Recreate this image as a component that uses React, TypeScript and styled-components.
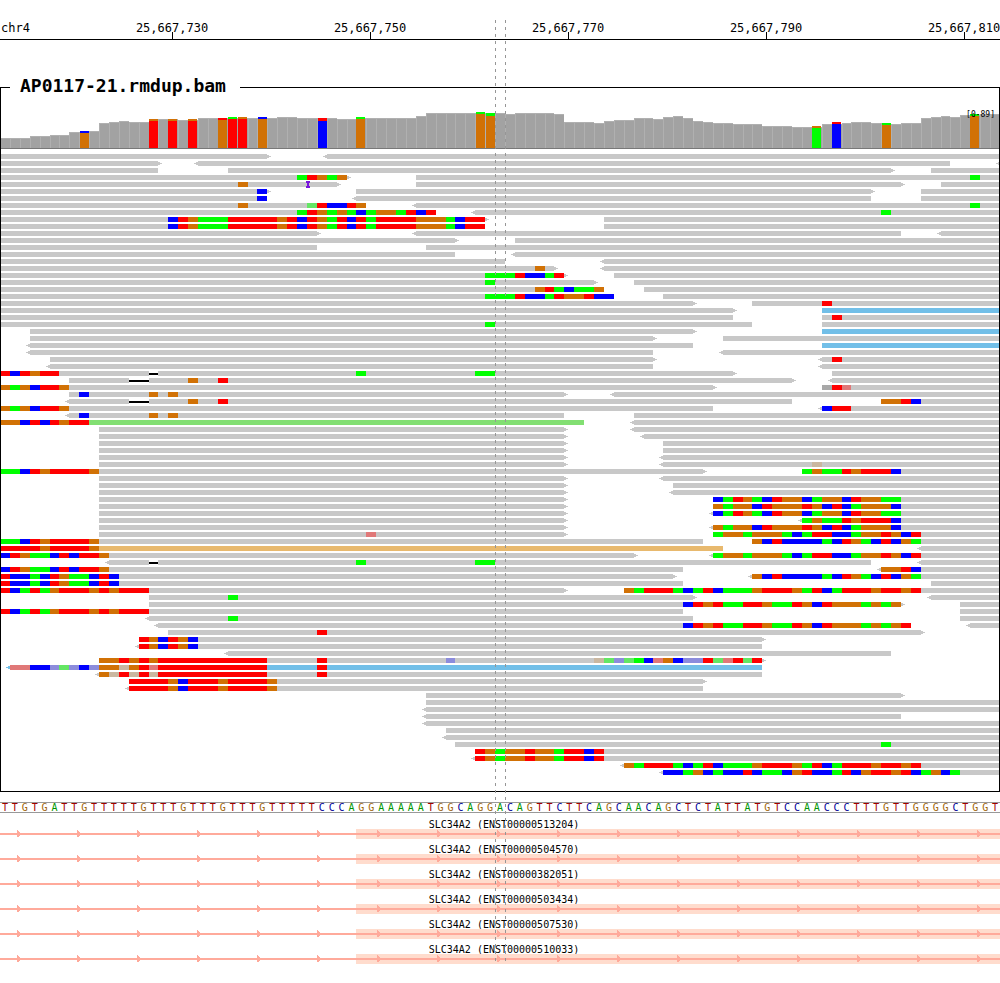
import React from "react";
import styled, { createGlobalStyle } from "styled-components";

const MONO = '"DejaVu Sans Mono", "Liberation Mono", monospace';

/* ---------- data ---------- */

const BASE = 9.9;
const px = (base: number) => Math.round(base * BASE);

const POSITIONS = ["25,667,730", "25,667,750", "25,667,770", "25,667,790", "25,667,810"];

const BASE_COLORS: Record<string, string> = {
  A: "#00ff00",
  C: "#0000ff",
  G: "#d17105",
  T: "#ff0000",
  a: "#64e664",
  c: "#8c8cdc",
  g: "#cab7a0",
  t: "#e07878",
  n: "#a8a8a8",
};

const READ_COLORS: Record<string, string> = {
  "": "#c8c8c8",
  b: "#72bfe8",
  g: "#82df72",
  o: "#e8b96e",
};

const LETTER_COLORS: Record<string, string> = {
  A: "#009600",
  C: "#000096",
  G: "#a0640a",
  T: "#a00000",
};

const SEQUENCE =
  "TTGTGATTGTTTTTGTTTGTTTGTTTGTTTTTCCCAGGAAAAATGGCAGGA" +
  "CAGTTCTTCAGCAACAGCTCTATTATGTCCAACCCTTTGTTGGGGCTGGT";

const TRANSCRIPTS = [
  "ENST00000513204",
  "ENST00000504570",
  "ENST00000382051",
  "ENST00000503434",
  "ENST00000507530",
  "ENST00000510033",
];

/* Depth per base. */
const DEPTH = [
  10, 10, 10, 12, 12, 13, 13, 16, 16, 17, 25, 26, 27, 26, 26, 29, 29, 29, 28, 28,
  30, 30, 30, 30, 30, 30, 30, 30, 31, 31, 30, 30, 30, 30, 29, 29, 30, 30, 30, 30,
  30, 30, 32, 35, 35, 35, 35, 35, 35, 35, 35, 34, 35, 35, 35, 35, 34, 26, 26, 26,
  25, 27, 28, 28, 30, 30, 29, 31, 32, 30, 27, 26, 25, 25, 24, 24, 24, 22, 22, 22,
  21, 21, 21, 24, 24, 25, 26, 26, 25, 25, 24, 25, 25, 30, 31, 32, 31, 33, 33, 34, 34,
];

/* Variant columns: left edge, total height, height of the main allele, minor + main allele. */
const VARIANTS: [number, number, number, string][] = [
  [80, 17, 15, "CG"],
  [149, 29, 27, "GT"],
  [168, 29, 27, "GT"],
  [188, 29, 27, "GT"],
  [218, 30, 28, "TG"],
  [228, 31, 29, "AT"],
  [238, 31, 29, "GT"],
  [258, 31, 29, "CG"],
  [318, 30, 27, "TC"],
  [356, 31, 29, "AG"],
  [476, 36, 34, "AG"],
  [486, 35, 32, "AG"],
  [812, 22, 20, "GA"],
  [832, 26, 24, "TC"],
  [882, 25, 23, "AG"],
  [970, 34, 32, "AG"],
];

const CLIP_A = "CTGAAATTTTTGTCTGATCTATTTTGGGACTT";
const CLIP_B = "AACTGTTTTG";
const CLIP_C = "AGAATGTTTC";
const CLIP_D = "CATGACTGGCAGGCTGGAA";
const CLIP_E = "GAGGCTGGGTGCTCAGGGC";
const CLIP_F = "AGGAGGGACATTCCAGGTGCT";
const CLIP_G = "GCTCCCCACTGACTCGA";
const CLIP_H = "CTGAACTCTTG";
const CLIP_I = "TCCACTGAACTC";
const CLIP_J = "TCATAGTTTGTGTTT";
const CLIP_K = "GATTTACATCAAAGTTTGATCATTTGTTGT";
const CLIP_L = "CTGTAATTGAATGCTGGGAGAG";
const CLIP_M = "TTTTGCTTTGTTTTG";
const CLIP_N = "TGAGGTGGATTCT";
const T11 = "TTTTTTTTTTT";

/*
 * One string per lane, coordinates in bases from the left edge:
 *   <a-b>   read, with an optional arrow at either end and a colour suffix
 *   n:SEQ   mismatching bases
 *   a~b     deletion
 *   n^      insertion
 */
const LANES = [
  "0-27> <33-101",
  "0-16> <20-96 <101-102",
  "0-16 23-90> 94-101",
  "0-35> 42-101 30:ATGAG 98:A",
  "0-34> 42-91> 95-101 24:G 31^",
  "0-27> 36-88> 93-101 26:C",
  "0-27 <36-88 93-101 26:C",
  "0-37 <42-101 24:G 31:aTCCTG 98:A",
  "0-44 <48-101 30:ATGAGACAGGATCT 89:A",
  `0-49> 61-101 17:${CLIP_A}`,
  `0-49 61-101 17:${CLIP_A}`,
  "0-32> <42-91 <95-101",
  "0-46> 52-101",
  "0-32 43-101",
  "0-46 <52-101",
  "0-51 <61-101",
  "0-56> <61-101 54:G",
  "0-57> 62-101 49:AAATCCAT",
  "0-60> 64-101 49:A",
  "0-61 65-101 54:GTACAAG",
  "0-62 67-101 49:AAATCCATGGTCC",
  "0-70> 76-101 83:T",
  "0-74> 83-101b",
  "0-74 83-101 84:T",
  "0-76 83-101 49:A",
  "3-70> 83-101b",
  "3-66> 73-101",
  "<3-70 83-101b",
  "<3-66 <73-101",
  "5-66> <83-101 84:T",
  "<5-66 <83-101",
  "0-74> 84-101 0:TCTGTT 15~16 36:A 48:AA",
  "7-80> <84-101 13~15 19:G 22:T",
  "0-72> 83-101 0:GAGCTTG 83:nTt",
  "7-57> <62-101 8:C 15:G 17:G",
  "<7-80 89-101 13~15 19:G 22:T 89:GGTC",
  "0-72 <83-101 0:GAGCTTG 83:CTT",
  "<7-57 64-101 8:C 15:G 17:G",
  "0-59g <64-101 0:GGCTCTGTT",
  "10-57> <64-101",
  "10-57> <65-101",
  "10-57> 67-101",
  "10-57> 67-101",
  "10-57> <67-101",
  "10-57> <67-101 82:g",
  `0-71> 81-101 0:${CLIP_B} 81:${CLIP_C}`,
  "10-57> <67-101",
  "10-57> 68-101",
  "10-57> <68-101",
  `10-57> 72-101 72:${CLIP_D}`,
  `10-57> 72-101 72:${CLIP_E}`,
  `10-57> <72-101 72:${CLIP_D}`,
  `10-57> <81-101 81:${CLIP_C}`,
  `10-57> <72-101 72:${CLIP_E}`,
  `10-57> 72-101 37:t 72:${CLIP_F}`,
  `0-71 76-101 0:${CLIP_B} 76:${CLIP_G}`,
  "0-73o <93-101 0:TTTTGTTTTG",
  `0-64> <72-101 0:${CLIP_H} 72:${CLIP_F}`,
  "<11-88 <93-101 15~16 36:A 48:AA",
  `0-69 <89-101 0:${CLIP_H} 89:GGTC`,
  `0-68> <76-101 0:${CLIP_I} 76:${CLIP_G}`,
  `0-69 94-101 0:${CLIP_I}`,
  `0-57> 63-101 0:${CLIP_J} 63:${CLIP_K}`,
  "15-70> <94-101 23:A",
  `15-91> 97-101 69:${CLIP_L}`,
  `0-69 97-101 0:${CLIP_J}`,
  "<15-70 97-101 23:A",
  `<16-92 <98-101 69:${CLIP_L}T`,
  "17-93> 32:T",
  "14-77> 14:TGCTGC",
  "<14-77 14:TGCTGC",
  "<23-90",
  `10-77> 10:GGTGTG${T11} 32:T 45:c 60:gacaACtGCccTatTaT`,
  `<1-77b 1:ttCCcacCcGGgGTt${T11} 32:T`,
  `<10-77 10:GgTgTg${T11} 32:T`,
  `13-71> 13:${CLIP_M}`,
  `<13-71 13:${CLIP_M}`,
  "43-91>",
  "43-101",
  "<43-101",
  "<43-91",
  "<43-101",
  "45-101",
  "<45-101",
  "46-101 89:A",
  `48-101 48:${CLIP_N}`,
  `<48-101 48:${CLIP_N}`,
  `<63-101 63:${CLIP_K}`,
  "<67-101 67:CCAGCACCTCAACGTCCATCGTTGTCAGCA",
];

/* ---------- styles ---------- */

const GlobalStyle = createGlobalStyle`
  body {
    margin: 0;
    background: #ffffff;
    color: #000000;
    font-family: ${MONO};
  }
`;

const Page = styled.main`
  position: relative;
  padding-bottom: 19px;
  overflow: hidden;
`;

const Ruler = styled.header`
  display: flex;
  overflow: hidden;
  padding-top: 23px;
  border-bottom: 1px solid #000000;
  font-size: 12px;
  line-height: 10px;
`;

const Chromosome = styled.div`
  flex: 0 0 7.3%;
  box-sizing: border-box;
  padding-left: 1px;
`;

const Mark = styled.div`
  flex: 0 0 19.8%;
  display: flex;
  flex-direction: column;
  align-items: center;

  &::after {
    content: "";
    width: 1px;
    height: 7px;
    margin-top: -1px;
    background: #000000;
  }
`;

const Track = styled.fieldset`
  position: relative;
  min-width: 0;
  margin: 37px 0 0;
  padding: 0;
  border: 1px solid #000000;
`;

const TrackName = styled.legend`
  box-sizing: border-box;
  min-width: 230px;
  margin-left: 9px;
  padding: 0 10px 2px;
  font-size: 18px;
  font-weight: bold;
  line-height: 18px;
`;

const DepthRange = styled.span`
  position: absolute;
  top: 13px;
  right: 4px;
  font-size: 8px;
  line-height: 10px;
`;

const Chart = styled.svg<{ $height: number }>`
  display: block;
  width: 100%;
  height: ${(p) => p.$height}px;
  shape-rendering: crispEdges;
`;

const SequenceStrip = styled.div`
  display: grid;
  grid-template-columns: repeat(101, 1fr);
  margin-top: 10px;
  padding-top: 1px;
  border: solid #999999;
  border-width: 1px 0;
  font-size: 10px;
  line-height: 8px;
  text-align: center;
`;

const Letter = styled.span<{ $base: string }>`
  min-width: 0;
  color: ${(p) => LETTER_COLORS[p.$base]};
`;

const Genes = styled.section`
  padding-top: 1px;
`;

const Gene = styled.div`
  padding-top: 7px;
`;

const GeneName = styled.div`
  padding-left: 8px;
  font-size: 10px;
  line-height: 8px;
  text-align: center;
`;

const Guide = styled.div<{ $left: string }>`
  position: absolute;
  top: 20px;
  bottom: 22px;
  left: ${(p) => p.$left};
  width: 1px;
  background: repeating-linear-gradient(#969696 0 3px, transparent 3px 7px);
`;

/* ---------- pieces ---------- */

const COVERAGE_HEIGHT = 52;

function Coverage() {
  const floor = COVERAGE_HEIGHT - 1;
  return (
    <Chart $height={COVERAGE_HEIGHT} viewBox={`1 0 998 ${COVERAGE_HEIGHT}`} preserveAspectRatio="none">
      {DEPTH.map((d, i) => (
        <g key={i}>
          <rect x={px(i)} y={floor - d} width={px(i + 1) - px(i)} height={d} fill="#b0b0b0" />
          <rect x={px(i) + 1} y={floor - d + 1} width={px(i + 1) - px(i) - 1} height={d - 1} fill="#a2a2a2" />
        </g>
      ))}
      {VARIANTS.map(([x, total, main, alleles]) => (
        <g key={x}>
          <rect x={x} y={floor - total} width={9} height={total - main} fill={BASE_COLORS[alleles[0]]} />
          <rect x={x} y={floor - main} width={9} height={main} fill={BASE_COLORS[alleles[1]]} />
        </g>
      ))}
      <rect x={0} y={floor} width={1000} height={1} fill="#787878" />
    </Chart>
  );
}

function Item({ code, y }: { code: string; y: number }) {
  if (code.includes(":")) {
    const [start, bases] = code.split(":");
    return (
      <>
        {[...bases].map((b, k) => {
          const at = Number(start) + k;
          return <rect key={k} x={px(at)} y={y} width={px(at + 1) - px(at)} height={5} fill={BASE_COLORS[b]} />;
        })}
      </>
    );
  }
  if (code.includes("~")) {
    const [a, b] = code.split("~").map((n) => px(Number(n)));
    return (
      <>
        <rect x={a} y={y} width={b - a} height={5} fill="#ffffff" />
        <rect x={a} y={y + 2} width={b - a} height={2} fill="#000000" />
      </>
    );
  }
  if (code.endsWith("^")) {
    const x = px(parseInt(code, 10));
    return <path d={`M${x - 1} ${y - 1}h4v2h-1v3h1v2h-4v-2h1v-3h-1z`} fill="#7814dc" />;
  }
  const m = /^(<?)(\d+)-(\d+)(>?)([a-z]?)$/.exec(code)!;
  const a = px(Number(m[2]));
  const b = px(Number(m[3]));
  return (
    <g fill={READ_COLORS[m[5]]}>
      <rect x={a} y={y} width={b - a} height={5} />
      {m[1] && <path d={`M${a} ${y + 1}h-2v1h-2v1h2v1h2z`} />}
      {m[4] && <path d={`M${b} ${y + 1}h2v1h2v1h-2v1h-2z`} />}
    </g>
  );
}

function Reads() {
  return (
    <Chart $height={642} viewBox="1 0 998 642" preserveAspectRatio="none">
      {LANES.map((lane, r) => (
        <g key={r}>
          {lane.split(" ").map((code, k) => (
            <Item key={k} code={code} y={5 + 7 * r} />
          ))}
        </g>
      ))}
    </Chart>
  );
}

function Transcript({ id }: { id: string }) {
  return (
    <Gene>
      <GeneName>SLC34A2 ({id})</GeneName>
      <Chart $height={10}>
        <defs>
          <pattern id={id} width="60" height="10" patternUnits="userSpaceOnUse">
            <path d="M17 1h1v1h1v1h1v1h1v2h-1v1h-1v1h-2z" fill="#ffaa9b" />
          </pattern>
        </defs>
        <rect x="35.6%" width="64.4%" height="10" fill="#ffdccd" />
        <rect y="4" width="100%" height="2" fill="#ffaa9b" />
        <rect width="100%" height="10" fill={`url(#${id})`} />
      </Chart>
    </Gene>
  );
}

export default function App() {
  return (
    <>
      <GlobalStyle />
      <Page>
        <Ruler>
          <Chromosome>chr4</Chromosome>
          {POSITIONS.map((p) => (
            <Mark key={p}>{p}</Mark>
          ))}
        </Ruler>
        <Track>
          <TrackName>AP0117-21.rmdup.bam</TrackName>
          <Coverage />
          <DepthRange>[0-89]</DepthRange>
          <Reads />
        </Track>
        <SequenceStrip>
          {[...SEQUENCE].map((b, i) => (
            <Letter key={i} $base={b}>
              {b}
            </Letter>
          ))}
        </SequenceStrip>
        <Genes>
          {TRANSCRIPTS.map((id) => (
            <Transcript key={id} id={id} />
          ))}
        </Genes>
        <Guide $left="49.5%" />
        <Guide $left="50.5%" />
      </Page>
    </>
  );
}
